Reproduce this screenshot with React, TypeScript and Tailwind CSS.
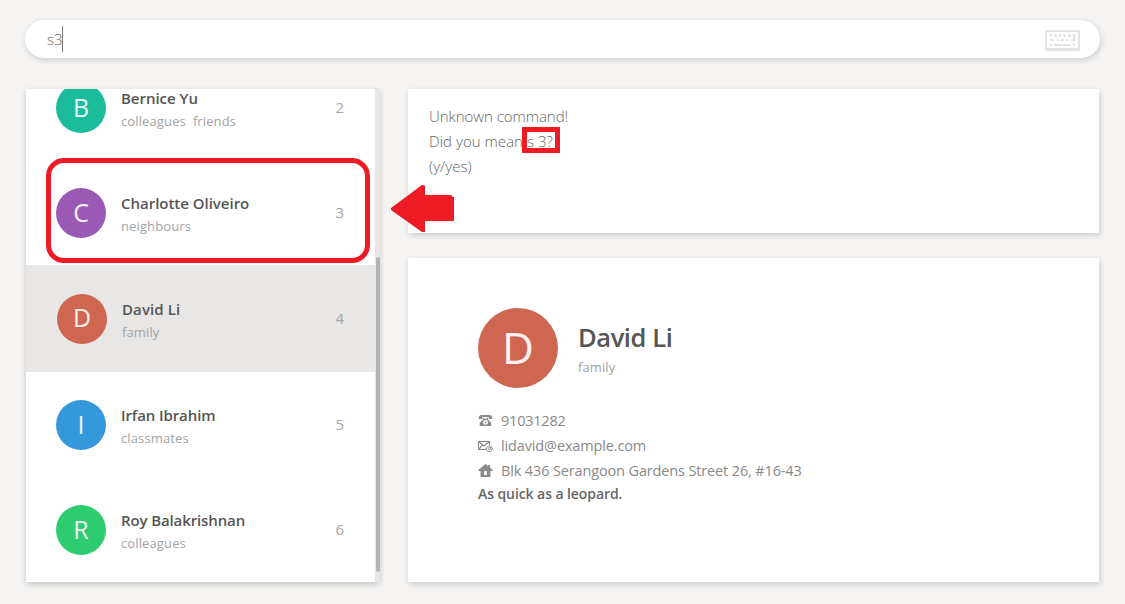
type Person = {
  initial: string;
  name: string;
  tags: string[];
  index: number;
  color: string;
  row: string;
  nameSpacing: string;
};

const people: Person[] = [
  { initial: "B", name: "Bernice Yu", tags: ["colleagues", "friends"], index: 2, color: "bg-[#1abc9c]", row: "-mt-[34px] h-[106px] pl-[30px]", nameSpacing: "tracking-[-0.02px]" },
  { initial: "C", name: "Charlotte Oliveiro", tags: ["neighbours"], index: 3, color: "bg-[#9b59b6]", row: "h-[104px] pl-[30px]", nameSpacing: "tracking-[-0.02px]" },
  { initial: "D", name: "David Li", tags: ["family"], index: 4, color: "bg-[#cf6651]", row: "h-[107px] bg-[#e8e7e6] pl-[31px]", nameSpacing: "tracking-[0.1px]" },
  { initial: "I", name: "Irfan Ibrahim", tags: ["classmates"], index: 5, color: "bg-[#3498db]", row: "h-[106px] pl-[30px]", nameSpacing: "tracking-[-0.1px]" },
  { initial: "R", name: "Roy Balakrishnan", tags: ["colleagues"], index: 6, color: "bg-[#2ecc71]", row: "h-[104px] pl-[30px]", nameSpacing: "tracking-[-0.12px]" },
];

function PersonRow({ person }: { person: Person }) {
  return (
    <li className={`flex shrink-0 items-center pr-[31px] ${person.row}`}>
      <div className={`flex size-[50px] shrink-0 items-center justify-center rounded-full pb-[2px] text-[25px] leading-none text-white/90 ${person.color}`}>
        {person.initial}
      </div>
      <div className="ml-[15px] flex-1 pt-[2px]">
        <div className={`text-[15px] leading-[24px] font-semibold text-[#555] ${person.nameSpacing}`}>{person.name}</div>
        <div className="flex gap-[7px] text-[13px] leading-[22px] tracking-[0.12px] text-[#a3a3a3]">
          {person.tags.map((tag) => (
            <span key={tag}>{tag}</span>
          ))}
        </div>
      </div>
      <span className="pb-px text-[15px] leading-none text-[#a6a6a6]">{person.index}</span>
    </li>
  );
}

function KeyboardIcon() {
  return (
    <svg className="block h-[21px] w-[35px]" viewBox="0 0 35 21" fill="#e3e3e3" shapeRendering="crispEdges">
      <path fillRule="evenodd" d="M1 0H34V1H35V20H34V21H1V20H0V1H1ZM2 2V18H33V2Z" />
      <path d="M5 4h2v3H5zM9 4h2v2H9zM10 5h2v2h-2zM14 4h2v3h-2zM18 4h2v2h-2zM19 5h2v2h-2zM23 4h3v3h-3zM28 4h2v7h-4V9h2z" />
      <path d="M5 9h4v2H5zM12 9h2v2h-2zM16 9h3v2h-3zM21 9h2v2h-2zM5 14h2v2H5zM9 14h17v2H9zM28 14h2v2h-2z" />
    </svg>
  );
}

function PhoneIcon() {
  return (
    <svg className="h-[15px] w-[15px]" viewBox="0 0 15 15" fill="#8b8b8b">
      <path d="M3 2h9Q14 2.2 14.2 4.3V6h-3.4V4H4.2V6H.8V4.3Q1 2.2 3 2Z" />
      <path fillRule="evenodd" d="M4.9 4.8h1.3v1h2.6v-1h1.3v1.8L13.3 10v3H1.7v-3l3.2-3.4ZM7.5 7a2.5 2.4 0 1 0 0 4.8A2.5 2.4 0 0 0 7.5 7Z" />
      <circle cx="7.5" cy="9.4" r=".9" />
    </svg>
  );
}

function MailIcon() {
  return (
    <svg className="h-[15px] w-[15px]" viewBox="0 0 15 15" fill="none" stroke="#858585">
      <path strokeWidth="1.1" d="M8 11.5H.5v-8h11v3.5M.8 3.8 6 8l5.2-4.2M.8 11.2 4.2 7.4" />
      <path strokeWidth=".9" d="M13.5 12.8a3 2.8 0 1 1 .9-2.3c0 1.6-1.7 1.7-1.7.4V9.3" />
      <circle cx="11.5" cy="10.5" r="1.1" strokeWidth=".9" />
    </svg>
  );
}

function HomeIcon() {
  return (
    <svg className="h-[15px] w-[15px]" viewBox="0 0 15 15" fill="#8b8b8b">
      <path fillRule="evenodd" d="M7.5 1 10 3V2h2v2.6L14.7 7v.9h-2.2V14h-10V7.9H.3V7ZM6.2 8v4h2.6V8Z" />
    </svg>
  );
}

export default function App() {
  return (
    <main className="relative flex h-[604px] w-[1125px] flex-col overflow-hidden bg-[#f5f4f3] pt-5 font-['Open_Sans','Noto_Sans',sans-serif]">
      <header className="ml-[25px] flex h-[38px] w-[1075px] items-center rounded-full bg-white pr-5 pl-[22px] shadow-[1px_2px_6px_rgba(0,0,0,0.17)]">
        <span className="text-[15px] font-light tracking-[-0.1px] text-[#666]">s3</span>
        <span className="h-[26px] w-px bg-[#777]" />
        <span className="mt-[3px] ml-auto"><KeyboardIcon /></span>
      </header>

      <div className="mt-[31px] ml-[26px] flex h-[493px] gap-[28px]">
        <section className="flex w-[354px] bg-[#e8e7e6] shadow-[0_2px_6px_rgba(0,0,0,0.2)]">
          <ul className="flex w-[349px] flex-col overflow-hidden bg-white">
            {people.map((person) => (
              <PersonRow key={person.index} person={person} />
            ))}
          </ul>
          <div className="mt-[168px] ml-px h-[315px] w-1 rounded-[2px] bg-[#b5b4b4]" />
        </section>

        <div className="flex w-[691px] flex-col gap-[25px]">
          <section className="h-[144px] bg-white pt-[15px] pl-[21px] text-[15px] leading-[25px] font-light text-[#666] shadow-[1px_2px_6px_rgba(0,0,0,0.18)]">
            <p className="tracking-[-0.05px]">Unknown command!</p>
            <p className="tracking-[0.04px]">Did you mean s 3?</p>
            <p className="tracking-[0.06px]">(y/yes)</p>
          </section>

          <section className="h-[324px] bg-white pt-[50px] pl-[70px] shadow-[1px_2px_6px_rgba(0,0,0,0.18)]">
            <div className="flex items-center">
              <div className="flex size-20 items-center justify-center rounded-full bg-[#cf6651] pb-[3px] text-[44px] leading-none text-white/90">D</div>
              <div className="ml-5 pt-[3px]">
                <h1 className="text-[25.5px] leading-[34px] font-semibold tracking-[-0.42px] text-[#555]">David Li</h1>
                <p className="mt-px text-[13px] leading-[24px] tracking-[0.1px] text-[#a0a0a0]">family</p>
              </div>
            </div>
            <div className="mt-[20px] text-[14.5px] leading-[25px] tracking-[-0.14px] text-[#898989]">
              <p className="flex items-center gap-2"><PhoneIcon /><span className="tracking-[-0.22px]">91031282</span></p>
              <p className="flex items-center gap-2"><MailIcon /><span>lidavid@example.com</span></p>
              <p className="flex items-center gap-2"><HomeIcon /><span>Blk 436 Serangoon Gardens Street 26, #16-43</span></p>
            </div>
            <p className="text-[14px] leading-[22px] font-semibold tracking-[-0.08px] text-[#666]">As quick as a leopard.</p>
          </section>
        </div>
      </div>

      <div className="absolute top-[158px] left-[46px] h-[105px] w-[324px] rounded-[18px] border-5 border-[#ed1c24]" />
      <div className="absolute top-[127px] left-[522px] h-[26px] w-[38px] border-5 border-[#ed1c24]" />
      <svg className="absolute top-[185px] left-[391px] h-[47px] w-[63px]" viewBox="0 0 63 47" fill="#ed1c24">
        <path d="M0 23 31 0Q34 0 34 1V10H60Q61 12 63 12V36H34V47H31L0 25Z" />
      </svg>
    </main>
  );
}
